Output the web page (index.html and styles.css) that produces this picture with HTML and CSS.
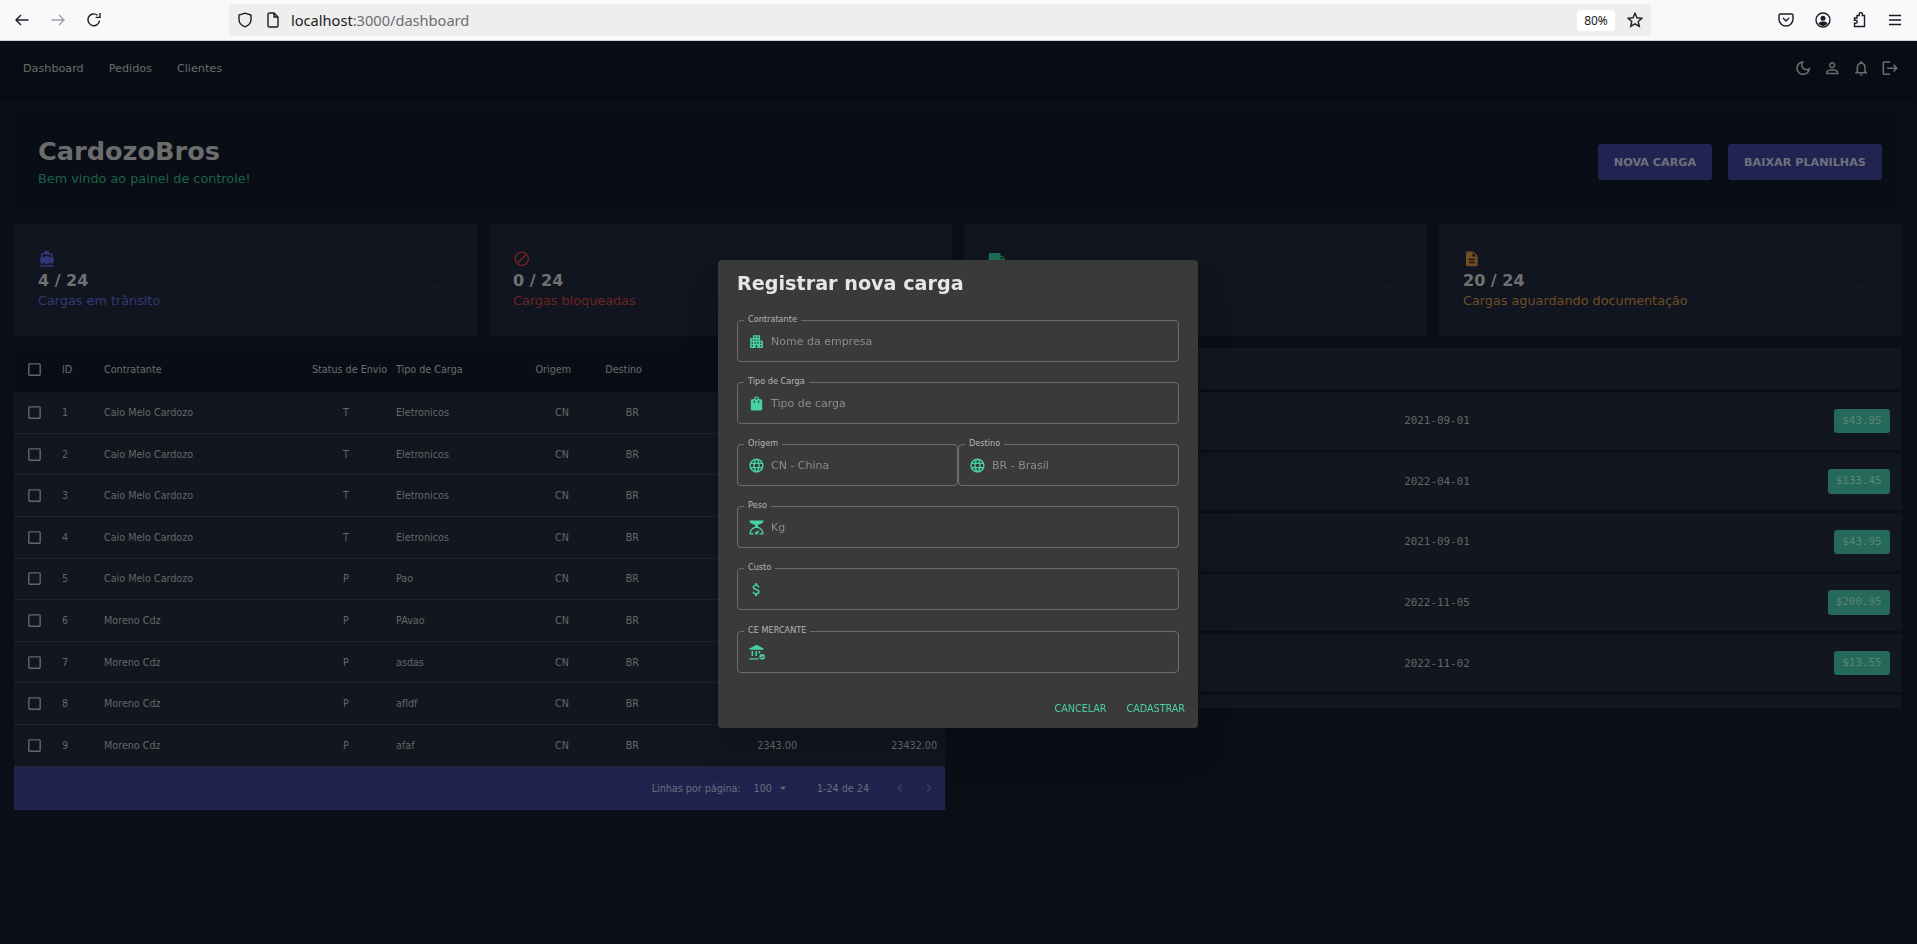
FILE: index.html
```html
<!DOCTYPE html>
<html lang="pt-BR">
<head>
<meta charset="utf-8">
<title>CardozoBros</title>
<link rel="stylesheet" href="styles.css">
</head>
<body>
<header class="chrome">
  <svg class="tb tb-back" viewBox="0 0 16 16"><path d="M14.5 8H2M7 3 2 8l5 5"/></svg>
  <svg class="tb tb-fwd" viewBox="0 0 16 16"><path d="M1.5 8H14M9 3l5 5-5 5"/></svg>
  <svg class="tb tb-reload" viewBox="0 0 16 16"><path d="M13.6 8.6A5.9 5.9 0 1 1 11.6 3.3M14 1v4.4H9.6"/></svg>
  <div class="urlbar">
    <svg class="tb tb-shield" viewBox="0 0 16 16"><path d="M8 1.2 14 3v4.6c0 3.4-2.6 6-6 7.2-3.4-1.2-6-3.8-6-7.2V3z"/></svg>
    <svg class="tb tb-doc" viewBox="0 0 16 16"><path d="M3 2.5A1.5 1.5 0 0 1 4.500 1H9l4 4v8.500a1.500 1.500 0 0 1-1.500 1.500h-7A1.500 1.500 0 0 1 3 13.500zM9 1v4h4"/></svg>
    <span class="url"><b>localhost</b>:3000/dashboard</span>
    <span class="zoomlevel">80%</span>
    <svg class="tb tb-star" viewBox="0 0 16 16"><path d="m8 1.300 2 4.500 4.900.5-3.700 3.200 1.100 4.800L8 11.800l-4.300 2.500 1.100-4.800L1.100 6.300 6 5.800z"/></svg>
  </div>
  <svg class="tb tb-pocket" viewBox="0 0 16 16"><path d="M2.500 2h11A1.500 1.500 0 0 1 15 3.500V7a7 7 0 0 1-14 0V3.500A1.500 1.500 0 0 1 2.500 2zM5 6l3 3 3-3"/></svg>
  <svg class="tb tb-account" viewBox="0 0 16 16"><circle cx="8" cy="8" r="7"/><circle class="solid" cx="8" cy="6.300" r="2.500"/><path class="solid" d="M3.500 11.500c1-1.500 2.600-2 4.500-2s3.500.5 4.500 2C11.500 13 10 14 8 14s-3.500-1-4.500-2.500z"/></svg>
  <svg class="tb tb-ext" viewBox="0 0 16 16"><path d="M6 3.500h2.200V2.200a1.600 1.600 0 0 1 3.200 0v1.300h2.100v11H3.500v-3.200h1.200a1.500 1.500 0 0 0 0-3H3.500V6h2.500z"/></svg>
  <svg class="tb tb-menu" viewBox="0 0 16 16"><path d="M2 3.500h12M2 8h12M2 12.500h12"/></svg>
</header>

<nav class="topnav">
  <a class="navlink">Dashboard</a>
  <a class="navlink">Pedidos</a>
  <a class="navlink">Clientes</a>
  <div class="navicons">
    <svg class="ico" viewBox="0 0 24 24"><path d="M9.37 5.510c-.18.640-.27 1.310-.27 1.990 0 4.080 3.320 7.400 7.400 7.400.68 0 1.350-.09 1.990-.27C17.450 17.190 14.930 19 12 19c-3.860 0-7-3.140-7-7 0-2.930 1.810-5.450 4.370-6.490zM12 3c-4.970 0-9 4.030-9 9s4.030 9 9 9 9-4.030 9-9c0-.46-.04-.92-.1-1.360-.98 1.370-2.580 2.260-4.400 2.260-2.980 0-5.400-2.420-5.400-5.400 0-1.810.89-3.420 2.260-4.400-.44-.06-.9-.1-1.360-.1z"/></svg>
    <svg class="ico" viewBox="0 0 24 24"><path d="M12 5.900c1.160 0 2.100.94 2.100 2.100s-.94 2.100-2.100 2.100S9.900 9.160 9.900 8s.94-2.100 2.100-2.100m0 9c2.970 0 6.100 1.460 6.100 2.100v1.100H5.900V17c0-.64 3.130-2.100 6.100-2.100M12 4C9.790 4 8 5.790 8 8s1.790 4 4 4 4-1.790 4-4-1.790-4-4-4zm0 9c-2.670 0-8 1.340-8 4v3h16v-3c0-2.660-5.330-4-8-4z"/></svg>
    <svg class="ico" viewBox="0 0 24 24"><path d="M12 22c1.100 0 2-.9 2-2h-4c0 1.100.9 2 2 2zm6-6v-5c0-3.070-1.630-5.640-4.500-6.320V4c0-.83-.67-1.500-1.500-1.500s-1.500.67-1.500 1.500v.68C7.640 5.360 6 7.920 6 11v5l-2 2v1h16v-1l-2-2zm-2 1H8v-6c0-2.480 1.510-4.500 4-4.500s4 2.020 4 4.500v6z"/></svg>
    <svg class="ico" viewBox="0 0 24 24"><path d="M17 7l-1.410 1.410L18.170 11H8v2h10.170l-2.580 2.580L17 17l5-5zM4 5h8V3H4c-1.100 0-2 .9-2 2v14c0 1.100.9 2 2 2h8v-2H4V5z"/></svg>
  </div>
</nav>

<main class="content">
  <section class="hero">
    <div>
      <h1 class="brand">CardozoBros</h1>
      <p class="welcome">Bem vindo ao painel de controle!</p>
    </div>
    <div class="actions">
      <button class="cta cta-a">NOVA CARGA</button>
      <button class="cta cta-b">BAIXAR PLANILHAS</button>
    </div>
  </section>

  <section class="cards">
    <article class="card blue">
      <div>
        <svg class="cardicon" viewBox="0 0 24 24"><path d="M20 21c-1.390 0-2.780-.47-4-1.320-2.440 1.710-5.560 1.710-8 0C6.780 20.530 5.390 21 4 21H2v2h2c1.380 0 2.740-.35 4-.99 2.520 1.290 5.480 1.290 8 0 1.260.65 2.620.99 4 .99h2v-2h-2zM3.950 19H4c1.600 0 3.020-.88 4-2 .98 1.120 2.400 2 4 2s3.020-.88 4-2c.98 1.120 2.400 2 4 2h.05l1.890-6.680c.08-.26.06-.54-.06-.78s-.34-.42-.6-.5L20 10.620V6c0-1.100-.9-2-2-2h-3V1H9v3H6c-1.100 0-2 .9-2 2v4.620l-1.290.42c-.26.08-.48.26-.6.5s-.15.52-.06.78L3.950 19zM6 6h12v3.970L12 8 6 9.970V6z"/></svg>
        <div class="count">4 / 24</div>
        <div class="cardlabel">Cargas em trânsito</div>
      </div>
      <span class="ring"></span>
    </article>
    <article class="card red">
      <div>
        <svg class="cardicon" viewBox="0 0 24 24"><path d="M12 2C6.480 2 2 6.480 2 12s4.480 10 10 10 10-4.480 10-10S17.520 2 12 2zM4 12c0-4.420 3.580-8 8-8 1.850 0 3.550.63 4.900 1.690L5.690 16.900C4.630 15.550 4 13.850 4 12zm8 8c-1.850 0-3.550-.63-4.900-1.690L18.310 7.100C19.370 8.450 20 10.150 20 12c0 4.420-3.580 8-8 8z"/></svg>
        <div class="count">0 / 24</div>
        <div class="cardlabel">Cargas bloqueadas</div>
      </div>
      <span class="ring"></span>
    </article>
    <article class="card green">
      <div>
        <svg class="cardicon" viewBox="0 0 24 24"><path d="M20 8h-3V4H3c-1.100 0-2 .9-2 2v11h2c0 1.660 1.340 3 3 3s3-1.340 3-3h6c0 1.660 1.340 3 3 3s3-1.340 3-3h2v-5l-3-4zM6 18.500c-.83 0-1.500-.67-1.500-1.500s.67-1.500 1.500-1.500 1.500.67 1.500 1.500-.67 1.500-1.500 1.500zm13.500-9l1.960 2.500H17V9.500h2.500zm-1.500 9c-.83 0-1.500-.67-1.500-1.500s.67-1.500 1.500-1.500 1.500.67 1.500 1.500-.67 1.500-1.500 1.500z"/></svg>
      </div>
      <span class="ring"></span>
    </article>
    <article class="card orange">
      <div>
        <svg class="cardicon" viewBox="0 0 24 24"><path d="M14 2H6c-1.100 0-1.990.9-1.990 2L4 20c0 1.100.89 2 1.990 2H18c1.100 0 2-.9 2-2V8l-6-6zm2 16H8v-2h8v2zm0-4H8v-2h8v2zm-3-5V3.500L18.500 9H13z"/></svg>
        <div class="count">20 / 24</div>
        <div class="cardlabel">Cargas aguardando documentação</div>
      </div>
      <span class="ring"></span>
    </article>
  </section>

  <section class="panels">
    <div class="tablepanel">
      <div class="trow thead">
        <span class="c-check"><svg class="check" viewBox="0 0 24 24"><path d="M19 5v14H5V5h14m0-2H5c-1.100 0-2 .9-2 2v14c0 1.100.9 2 2 2h14c1.100 0 2-.9 2-2V5c0-1.100-.9-2-2-2z"/></svg></span>
        <span class="c-id">ID</span><span class="c-name">Contratante</span><span class="c-status">Status de Envio</span><span class="c-type">Tipo de Carga</span><span class="c-num">Origem</span><span class="c-num">Destino</span><span class="c-num"></span><span class="c-last"></span>
      </div>
      <div class="trow"><span class="c-check"><svg class="check" viewBox="0 0 24 24"><path d="M19 5v14H5V5h14m0-2H5c-1.100 0-2 .9-2 2v14c0 1.100.9 2 2 2h14c1.100 0 2-.9 2-2V5c0-1.100-.9-2-2-2z"/></svg></span><span class="c-id">1</span><span class="c-name">Caio Melo Cardozo</span><span class="c-status">T</span><span class="c-type">Eletronicos</span><span class="c-num">CN</span><span class="c-num">BR</span><span class="c-num"></span><span class="c-last"></span></div>
      <div class="trow"><span class="c-check"><svg class="check" viewBox="0 0 24 24"><path d="M19 5v14H5V5h14m0-2H5c-1.100 0-2 .9-2 2v14c0 1.100.9 2 2 2h14c1.100 0 2-.9 2-2V5c0-1.100-.9-2-2-2z"/></svg></span><span class="c-id">2</span><span class="c-name">Caio Melo Cardozo</span><span class="c-status">T</span><span class="c-type">Eletronicos</span><span class="c-num">CN</span><span class="c-num">BR</span><span class="c-num"></span><span class="c-last"></span></div>
      <div class="trow"><span class="c-check"><svg class="check" viewBox="0 0 24 24"><path d="M19 5v14H5V5h14m0-2H5c-1.100 0-2 .9-2 2v14c0 1.100.9 2 2 2h14c1.100 0 2-.9 2-2V5c0-1.100-.9-2-2-2z"/></svg></span><span class="c-id">3</span><span class="c-name">Caio Melo Cardozo</span><span class="c-status">T</span><span class="c-type">Eletronicos</span><span class="c-num">CN</span><span class="c-num">BR</span><span class="c-num"></span><span class="c-last"></span></div>
      <div class="trow"><span class="c-check"><svg class="check" viewBox="0 0 24 24"><path d="M19 5v14H5V5h14m0-2H5c-1.100 0-2 .9-2 2v14c0 1.100.9 2 2 2h14c1.100 0 2-.9 2-2V5c0-1.100-.9-2-2-2z"/></svg></span><span class="c-id">4</span><span class="c-name">Caio Melo Cardozo</span><span class="c-status">T</span><span class="c-type">Eletronicos</span><span class="c-num">CN</span><span class="c-num">BR</span><span class="c-num"></span><span class="c-last"></span></div>
      <div class="trow"><span class="c-check"><svg class="check" viewBox="0 0 24 24"><path d="M19 5v14H5V5h14m0-2H5c-1.100 0-2 .9-2 2v14c0 1.100.9 2 2 2h14c1.100 0 2-.9 2-2V5c0-1.100-.9-2-2-2z"/></svg></span><span class="c-id">5</span><span class="c-name">Caio Melo Cardozo</span><span class="c-status">P</span><span class="c-type">Pao</span><span class="c-num">CN</span><span class="c-num">BR</span><span class="c-num"></span><span class="c-last"></span></div>
      <div class="trow"><span class="c-check"><svg class="check" viewBox="0 0 24 24"><path d="M19 5v14H5V5h14m0-2H5c-1.100 0-2 .9-2 2v14c0 1.100.9 2 2 2h14c1.100 0 2-.9 2-2V5c0-1.100-.9-2-2-2z"/></svg></span><span class="c-id">6</span><span class="c-name">Moreno Cdz</span><span class="c-status">P</span><span class="c-type">PAvao</span><span class="c-num">CN</span><span class="c-num">BR</span><span class="c-num"></span><span class="c-last"></span></div>
      <div class="trow"><span class="c-check"><svg class="check" viewBox="0 0 24 24"><path d="M19 5v14H5V5h14m0-2H5c-1.100 0-2 .9-2 2v14c0 1.100.9 2 2 2h14c1.100 0 2-.9 2-2V5c0-1.100-.9-2-2-2z"/></svg></span><span class="c-id">7</span><span class="c-name">Moreno Cdz</span><span class="c-status">P</span><span class="c-type">asdas</span><span class="c-num">CN</span><span class="c-num">BR</span><span class="c-num"></span><span class="c-last"></span></div>
      <div class="trow"><span class="c-check"><svg class="check" viewBox="0 0 24 24"><path d="M19 5v14H5V5h14m0-2H5c-1.100 0-2 .9-2 2v14c0 1.100.9 2 2 2h14c1.100 0 2-.9 2-2V5c0-1.100-.9-2-2-2z"/></svg></span><span class="c-id">8</span><span class="c-name">Moreno Cdz</span><span class="c-status">P</span><span class="c-type">afldf</span><span class="c-num">CN</span><span class="c-num">BR</span><span class="c-num"></span><span class="c-last"></span></div>
      <div class="trow"><span class="c-check"><svg class="check" viewBox="0 0 24 24"><path d="M19 5v14H5V5h14m0-2H5c-1.100 0-2 .9-2 2v14c0 1.100.9 2 2 2h14c1.100 0 2-.9 2-2V5c0-1.100-.9-2-2-2z"/></svg></span><span class="c-id">9</span><span class="c-name">Moreno Cdz</span><span class="c-status">P</span><span class="c-type">afaf</span><span class="c-num">CN</span><span class="c-num">BR</span><span class="c-num">2343.00</span><span class="c-last">23432.00</span></div>
      <div class="tfoot">
        <span>Linhas por página:</span>
        <span class="perpage">100</span>
        <svg class="caret" viewBox="0 0 24 24"><path d="M7 10l5 5 5-5z"/></svg>
        <span class="range">1-24 de 24</span>
        <svg class="pager" viewBox="0 0 24 24"><path d="M15.410 7.410 14 6l-6 6 6 6 1.410-1.410L10.830 12z"/></svg>
        <svg class="pager" viewBox="0 0 24 24"><path d="M10 6 8.590 7.410 13.170 12l-4.580 4.590L10 18l6-6z"/></svg>
      </div>
    </div>

    <div class="orders">
      <div class="ohead"></div>
      <div class="orow"><span class="odate">2021-09-01</span><span class="badge">$43.95</span></div>
      <div class="orow"><span class="odate">2022-04-01</span><span class="badge">$133.45</span></div>
      <div class="orow"><span class="odate">2021-09-01</span><span class="badge">$43.95</span></div>
      <div class="orow"><span class="odate">2022-11-05</span><span class="badge">$200.95</span></div>
      <div class="orow"><span class="odate">2022-11-02</span><span class="badge">$13.55</span></div>
      <div class="orow"></div>
    </div>
  </section>
</main>

<div class="modal" role="dialog">
  <h2 class="modaltitle">Registrar nova carga</h2>
  <div class="field">
    <span class="flabel">Contratante</span>
    <svg class="ficon" viewBox="0 0 24 24"><path d="M17 11V3H7v4H3v14h8v-4h2v4h8V11h-4zM7 19H5v-2h2v2zm0-4H5v-2h2v2zm0-4H5V9h2v2zm4 4H9v-2h2v2zm0-4H9V9h2v2zm0-4H9V5h2v2zm4 8h-2v-2h2v2zm0-4h-2V9h2v2zm0-4h-2V5h2v2zm4 12h-2v-2h2v2zm0-4h-2v-2h2v2z"/></svg>
    <span class="ftext">Nome da empresa</span>
  </div>
  <div class="field">
    <span class="flabel">Tipo de Carga</span>
    <svg class="ficon" viewBox="0 0 24 24"><path d="M18 6h-2c0-2.210-1.790-4-4-4S8 3.790 8 6H6c-1.100 0-2 .9-2 2v12c0 1.100.9 2 2 2h12c1.100 0 2-.9 2-2V8c0-1.100-.9-2-2-2zm-8 4c0 .55-.45 1-1 1s-1-.45-1-1V8h2v2zm2-6c1.100 0 2 .9 2 2h-4c0-1.100.9-2 2-2zm4 6c0 .55-.45 1-1 1s-1-.45-1-1V8h2v2z"/></svg>
    <span class="ftext">Tipo de carga</span>
  </div>
  <div class="fieldpair">
    <div class="field">
      <span class="flabel">Origem</span>
      <svg class="ficon" viewBox="0 0 24 24"><path d="M11.990 2C6.470 2 2 6.480 2 12s4.470 10 9.990 10C17.520 22 22 17.520 22 12S17.520 2 11.990 2zm6.930 6h-2.950c-.32-1.250-.78-2.450-1.380-3.560 1.840.63 3.370 1.910 4.330 3.560zM12 4.040c.83 1.200 1.480 2.530 1.910 3.960h-3.820c.43-1.430 1.080-2.760 1.910-3.960zM4.260 14C4.100 13.360 4 12.690 4 12s.1-1.360.26-2h3.380c-.08.66-.14 1.320-.14 2s.06 1.340.14 2H4.260zm.82 2h2.950c.32 1.250.78 2.450 1.380 3.560-1.840-.63-3.370-1.900-4.330-3.560zm2.950-8H5.080c.96-1.660 2.490-2.930 4.330-3.560C8.810 5.550 8.350 6.750 8.030 8zM12 19.960c-.83-1.200-1.480-2.530-1.910-3.960h3.820c-.43 1.430-1.080 2.760-1.910 3.960zM14.340 14H9.660c-.09-.66-.16-1.320-.16-2s.07-1.350.16-2h4.680c.09.65.16 1.320.16 2s-.07 1.340-.16 2zm.25 5.560c.6-1.110 1.060-2.310 1.380-3.560h2.950c-.96 1.650-2.490 2.930-4.330 3.560zM16.360 14c.08-.66.14-1.320.14-2s-.06-1.340-.14-2h3.380c.16.64.26 1.310.26 2s-.1 1.360-.26 2h-3.380z"/></svg>
      <span class="ftext">CN - China</span>
    </div>
    <div class="field">
      <span class="flabel">Destino</span>
      <svg class="ficon" viewBox="0 0 24 24"><path d="M11.990 2C6.470 2 2 6.480 2 12s4.470 10 9.990 10C17.520 22 22 17.520 22 12S17.520 2 11.990 2zm6.930 6h-2.950c-.32-1.250-.78-2.450-1.380-3.560 1.840.63 3.370 1.910 4.330 3.560zM12 4.040c.83 1.200 1.480 2.530 1.910 3.960h-3.820c.43-1.430 1.080-2.760 1.910-3.960zM4.260 14C4.100 13.360 4 12.690 4 12s.1-1.360.26-2h3.380c-.08.66-.14 1.320-.14 2s.06 1.340.14 2H4.260zm.82 2h2.950c.32 1.250.78 2.450 1.380 3.560-1.840-.63-3.370-1.900-4.330-3.560zm2.950-8H5.080c.96-1.660 2.490-2.930 4.330-3.560C8.810 5.550 8.350 6.750 8.030 8zM12 19.960c-.83-1.200-1.480-2.530-1.910-3.960h3.820c-.43 1.430-1.080 2.760-1.910 3.960zM14.340 14H9.660c-.09-.66-.16-1.320-.16-2s.07-1.350.16-2h4.680c.09.65.16 1.320.16 2s-.07 1.340-.16 2zm.25 5.560c.6-1.110 1.060-2.310 1.380-3.560h2.950c-.96 1.650-2.490 2.930-4.330 3.560zM16.360 14c.08-.66.14-1.320.14-2s-.06-1.340-.14-2h3.380c.16.64.26 1.310.26 2s-.1 1.360-.26 2h-3.380z"/></svg>
      <span class="ftext">BR - Brasil</span>
    </div>
  </div>
  <div class="field">
    <span class="flabel">Peso</span>
    <svg class="ficon" viewBox="0 0 24 24"><path d="M14 11V8c4.560-.58 8-3.100 8-6H2c0 2.900 3.440 5.420 8 6v3c-3.680.73-8 3.610-8 11h6v-2H4.130c.93-6.830 6.650-7.200 7.870-7.200s6.940.37 7.870 7.200H16v2h6c0-7.390-4.320-10.270-8-11zm-2 11c-1.100 0-2-.9-2-2 0-.55.22-1.050.59-1.410C11.390 17.790 16 16 16 16s-1.790 4.610-2.590 5.410c-.36.37-.86.59-1.410.59z"/></svg>
    <span class="ftext">Kg</span>
  </div>
  <div class="field field-cost">
    <span class="flabel">Custo</span>
    <svg class="ficon" viewBox="0 0 24 24"><path d="M11.800 10.900c-2.270-.59-3-1.200-3-2.150 0-1.090 1.010-1.850 2.700-1.850 1.780 0 2.440.85 2.500 2.100h2.210c-.07-1.720-1.120-3.300-3.210-3.810V3h-3v2.160c-1.940.42-3.500 1.680-3.500 3.610 0 2.310 1.910 3.460 4.700 4.130 2.500.6 3 1.480 3 2.410 0 .69-.49 1.790-2.700 1.790-2.060 0-2.870-.92-2.980-2.100h-2.200c.12 2.190 1.760 3.420 3.680 3.830V21h3v-2.150c1.950-.37 3.500-1.500 3.500-3.550 0-2.840-2.430-3.810-4.700-4.400z"/></svg>
  </div>
  <div class="field">
    <span class="flabel">CE MERCANTE</span>
    <svg class="ficon" viewBox="-2 0 24 24"><path d="M10 1 0 6.500V8h20V6.500zM3 10h2.200v7H3zM8.400 10h2.200v7H8.400zM13 10h2.200v3H13zM0 20h13v2H0z"/><path fill-rule="evenodd" d="M18 14a4 4 0 1 1 0 8 4 4 0 0 1 0-8zm1.900 2.500-2.500 2.500-1.200-1.200-.8.8 2 2 3.300-3.300z"/></svg>
  </div>
  <div class="modalactions">
    <button class="textbtn">CANCELAR</button>
    <button class="textbtn">CADASTRAR</button>
  </div>
</div>
</body>
</html>
```
FILE: styles.css
```css
* { box-sizing: border-box; }
html, body { margin: 0; height: 944px; overflow: hidden; }
body { background: #0a0e17; font-family: "DejaVu Sans", sans-serif; color: #757575; }

/* browser chrome */
.chrome { height: 41px; background: #f9f9fb; border-bottom: 1px solid #d4d4d6; display: flex; align-items: center; position: relative; }
.tb { width: 16px; height: 16px; fill: none; stroke: #1c1b22; stroke-width: 1.4; flex: none; }
.tb .solid { fill: #1c1b22; stroke: none; }
.tb-back { margin-left: 14px; }
.tb-fwd { margin-left: 20px; stroke: #a0a0a6; }
.tb-reload { margin-left: 20px; }
.urlbar { margin-left: 127px; width: 1422px; height: 32px; background: #eeeeee; border-radius: 4px; display: flex; align-items: center; font-family: "Noto Sans", sans-serif; font-size: 14.6px; color: #6d6d72; }
.tb-shield { margin-left: 8px; }
.tb-doc { margin-left: 12px; }
.url { margin-left: 10px; flex: 1; }
.url b { font-weight: 400; color: #1c1b22; }
.zoomlevel { width: 38px; height: 21px; background: #fff; border-radius: 4px; font-size: 12px; color: #1c1b22; display: flex; align-items: center; justify-content: center; }
.tb-star { margin-left: 12px; margin-right: 8px; }
.tb-pocket { margin-left: 127px; }
.tb-account { margin-left: 21px; }
.tb-ext { margin-left: 20px; }
.tb-menu { margin-left: 20px; }

/* app nav */
.topnav { height: 56px; background: #080c14; display: flex; align-items: center; padding: 0 18px 2px 23px; box-shadow: 0 1px 3px rgba(0,0,0,.25); }
.navlink { font-size: 11.2px; color: #6c6c6c; margin-right: 25px; }
.navicons { margin-left: auto; display: flex; gap: 10.6px; }
.ico { width: 18.4px; height: 18.4px; fill: #6d6d6d; }

/* content */
.content { padding: 15px 15px 0 14px; }
.hero { height: 100px; background: #090d15; display: flex; align-items: center; justify-content: space-between; padding: 0 20px 0 24px; margin-bottom: 12px; }
.brand { margin: -1px 0 0; font-size: 25.6px; line-height: 30px; font-weight: 700; color: #6c6c6c; }
.welcome { margin: 5px 0 0; font-size: 12.8px; line-height: 16px; color: #1c624b; }
.actions { display: flex; gap: 16px; }
.cta { height: 36px; border: 0; border-radius: 3px; background: #212450; color: #6f7080; font: 700 11.2px "DejaVu Sans", sans-serif; }
.cta-a { width: 114px; }
.cta-b { width: 154px; }

.cards { display: grid; grid-template-columns: repeat(4, 463px); gap: 12px; margin-bottom: 12px; }
.card { height: 112px; background: #11151f; padding: 26px 25px 0 24px; display: flex; justify-content: space-between; align-items: flex-start; }
.cardicon { display: block; width: 17.6px; height: 17.6px; fill: currentColor; }
.count { margin-top: 2px; font-size: 16px; line-height: 22px; font-weight: 700; color: #717171; }
.cardlabel { font-size: 12.8px; line-height: 18px; }
.blue { color: #333775; }
.red { color: #6e2323; }
.green { color: #1f6b54; }
.orange { color: #704e24; }
.ring { width: 31px; height: 31px; border-radius: 50%; margin-top: 1px; border-bottom: 1px solid #0c1019; }

/* table */
.panels { display: grid; grid-template-columns: 931px 938px; gap: 19px; }
.trow { display: grid; grid-template-columns: 38px 42px 208px 88px 136px 54px 70px 158px 137px; height: 41.6px; align-items: center; background: #11161f; border-bottom: 1px solid #20242b; font-size: 9.6px; color: #666; white-space: nowrap; }
.thead { height: 44.3px; background: #090d15; border-bottom: 0; color: #6e6e6e; padding-bottom: 1px; }
.c-check { padding-left: 12px; display: flex; }
.check { width: 17px; height: 17px; fill: #666; }
.c-id { padding-left: 10px; }
.c-name { padding-left: 10px; }
.c-status { text-align: center; }
.thead .c-status { padding-left: 7px; }
.c-type { padding-left: 6px; }
.c-num { text-align: right; padding-right: 11px; }
.thead .c-num { padding-right: 9px; }
.thead .c-num + .c-num { padding-right: 8px; }
.c-last { text-align: right; padding-right: 8px; }
.tfoot { height: 43.3px; background: #20234d; display: flex; align-items: center; justify-content: flex-end; font-size: 9.6px; color: #6c6e7c; padding-right: 8px; }
.perpage { margin-left: 13px; }
.caret { width: 14px; height: 14px; fill: #6c6e7c; margin-left: 4px; }
.range { margin-left: 27px; margin-right: 23px; }
.pager { width: 16px; height: 16px; fill: #3f4266; margin-left: 13px; }
.range + .pager { margin-left: 0; }

/* orders */
.orders { height: 360px; overflow: hidden; display: flex; flex-direction: column; gap: 3px; }
.ohead { height: 41px; flex: none; background: #11161f; }
.orow { flex: none; height: 57.6px; background: #11161f; display: grid; grid-template-columns: 1fr auto 1fr; align-items: center; padding: 0 12.4px 0 20.4px; }
.odate { grid-column: 2; font: 10.9px "DejaVu Sans Mono", monospace; color: #666; }
.badge { grid-column: 3; justify-self: end; height: 24.5px; padding: 0 8px; border-radius: 3px; background: #25695a; font: 10.9px/24.5px "DejaVu Sans Mono", monospace; color: #5b8578; }

/* modal */
.modal { position: fixed; left: 718px; top: 260px; width: 480px; height: 468px; background: #3a3a3a; border-radius: 4px; padding: 0 19px; box-shadow: 0 11px 15px -7px rgba(0,0,0,.12), 0 24px 38px 3px rgba(0,0,0,.08); display: flex; flex-direction: column; }
.modaltitle { margin: 10px 0 23px; height: 27px; font-size: 19.2px; line-height: 27px; font-weight: 700; color: #e6e6e6; }
.field { position: relative; height: 42px; border: 1px solid #6c6c6c; border-radius: 4px; display: flex; align-items: center; padding-left: 9.5px; margin-bottom: 20px; flex: none; }
.field-cost { margin-bottom: 21px; }
.fieldpair { display: flex; flex: none; }
.fieldpair .field { width: 221px; }
.flabel { position: absolute; left: 6px; top: -7px; padding: 0 4px; background: #3a3a3a; font-size: 8.16px; line-height: 11px; color: #b4b4b4; }
.ficon { width: 17px; height: 17px; fill: #48d0a6; flex: none; }
.ftext { margin-left: 6.5px; font-size: 11px; color: #8b8b8b; }
.modalactions { margin-top: auto; margin-right: -6px; height: 36px; padding-top: 2px; padding-bottom: 6px; display: flex; justify-content: flex-end; align-items: center; gap: 20px; }
.textbtn { border: 0; background: none; padding: 0; color: #48d0a6; font: 9.6px "DejaVu Sans", sans-serif; }
```
